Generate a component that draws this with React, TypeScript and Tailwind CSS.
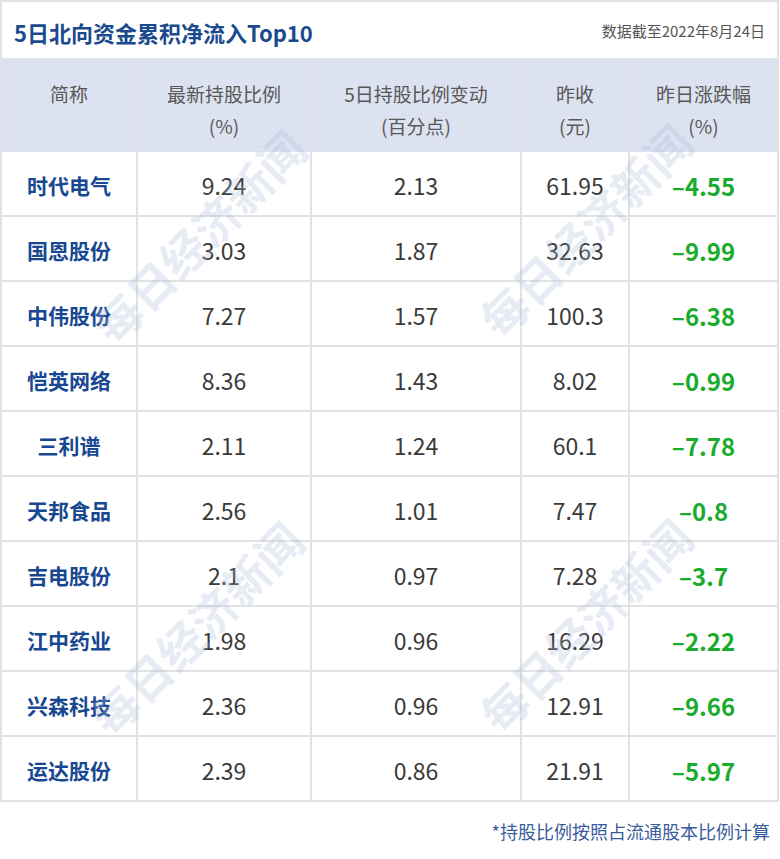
import React from 'react';

type Row = {
    name: string;
    ratio: string;
    change: string;
    close: string;
    pct: string;
};

const rows: Row[] = [
    { name: '时代电气', ratio: '9.24', change: '2.13', close: '61.95', pct: '–4.55' },
    { name: '国恩股份', ratio: '3.03', change: '1.87', close: '32.63', pct: '–9.99' },
    { name: '中伟股份', ratio: '7.27', change: '1.57', close: '100.3', pct: '–6.38' },
    { name: '恺英网络', ratio: '8.36', change: '1.43', close: '8.02', pct: '–0.99' },
    { name: '三利谱', ratio: '2.11', change: '1.24', close: '60.1', pct: '–7.78' },
    { name: '天邦食品', ratio: '2.56', change: '1.01', close: '7.47', pct: '–0.8' },
    { name: '吉电股份', ratio: '2.1', change: '0.97', close: '7.28', pct: '–3.7' },
    { name: '江中药业', ratio: '1.98', change: '0.96', close: '16.29', pct: '–2.22' },
    { name: '兴森科技', ratio: '2.36', change: '0.96', close: '12.91', pct: '–9.66' },
    { name: '运达股份', ratio: '2.39', change: '0.86', close: '21.91', pct: '–5.97' },
];

const headers = [
    ['简称', ''],
    ['最新持股比例', '(%)'],
    ['5日持股比例变动', '(百分点)'],
    ['昨收', '(元)'],
    ['昨日涨跌幅', '(%)'],
];

const cols = 'grid grid-cols-[134px_174px_210px_108px_149px]';
const cell = 'flex items-center justify-center border-l-2 border-[#e2e2e2] first:border-l-0';

// watermark centres
const marks = [
    'left-[199px] top-[236px]',
    'left-[585px] top-[230px]',
    'left-[196px] top-[628px]',
    'left-[585px] top-[625px]',
];

export default function App() {
    return (
        <div className="relative w-[780px] h-[859px] bg-white overflow-hidden font-['Noto_Sans_CJK_SC','Noto_Sans',sans-serif]">
            <div className="w-[779px] border-2 border-[#e2e2e2] border-b-0">
                {/* Title */}
                <div className="flex items-center justify-between h-[56px] pl-[12px] pr-[12px]">
                    <h1 className="text-[22px] font-bold text-[#1b4a8e] mt-[4px]">
                        5日北向资金累积净流入Top10
                    </h1>
                    <span className="text-[15px] text-[#555] mt-[2px]">数据截至2022年8月24日</span>
                </div>

                {/* Header */}
                <div className={`${cols} h-[94px] bg-[#dde2f0]`}>
                    {headers.map((h, i) => (
                        <div key={i} className={`${cell} flex-col justify-start pt-[20px] text-[19px] leading-[32px] text-[#585858]`}>
                            <span>{h[0]}</span>
                            {h[1] && <span>{h[1]}</span>}
                        </div>
                    ))}
                </div>

                {/* Body */}
                {rows.map((r) => (
                    <div key={r.name} className={`${cols} h-[65px] border-b-2 border-[#e2e2e2]`}>
                        <div className={`${cell} pt-[4px] text-[21px] font-bold text-[#174891]`}>{r.name}</div>
                        <div className={`${cell} pt-[4px] text-[23px] text-[#3a3a3a]`}>{r.ratio}</div>
                        <div className={`${cell} pt-[4px] text-[23px] text-[#3a3a3a]`}>{r.change}</div>
                        <div className={`${cell} pt-[4px] text-[23px] text-[#3a3a3a]`}>{r.close}</div>
                        <div className={`${cell} pt-[4px] text-[24px] font-bold text-[#19ab2b]`}>{r.pct}</div>
                    </div>
                ))}
            </div>

            {/* Footnote */}
            <div className="flex justify-end pr-[10px] pt-[16px]">
                <span className="text-[18px] text-[#3a5c9c]">*持股比例按照占流通股本比例计算</span>
            </div>

            {/* Watermarks */}
            {marks.map((m, i) => (
                <span
                    key={i}
                    className={`absolute ${m} -translate-x-1/2 -translate-y-1/2 -rotate-45 whitespace-nowrap text-[46px] font-bold text-[#a9badb]/30 pointer-events-none select-none font-['Noto_Sans_CJK_SC',serif]`}
                >
                    每日经济新闻
                </span>
            ))}
        </div>
    );
}
